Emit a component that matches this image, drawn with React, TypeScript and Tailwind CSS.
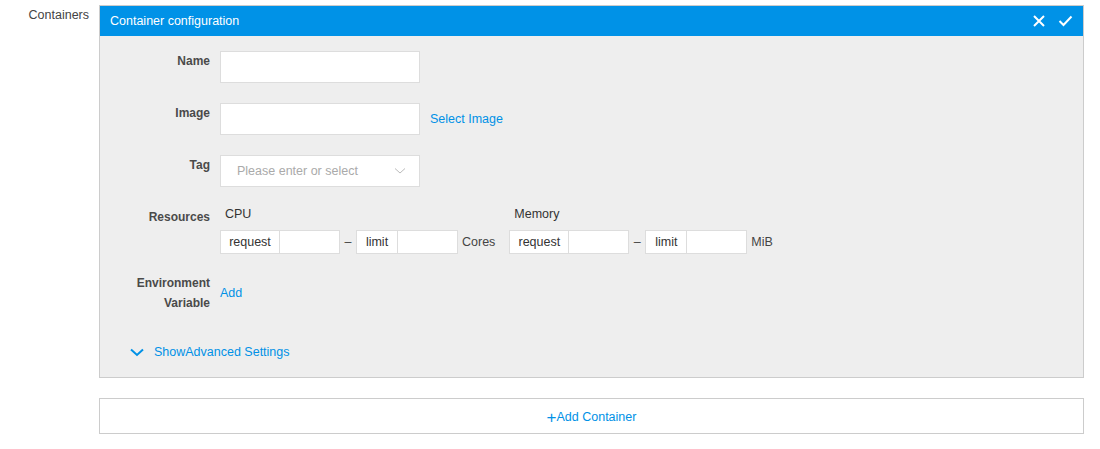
import React from "react";

const font = { fontFamily: '"Liberation Sans", Arial, sans-serif' };

function Label({ children }: { children: React.ReactNode }) {
  return (
    <div className="w-[120px] shrink-0 pr-[10px] text-right text-[12px] font-bold leading-[20px] text-[#4a4a4a]">
      {children}
    </div>
  );
}

function Group({ addon, w }: { addon: string; w: string }) {
  return (
    <div className="flex h-[24px]">
      <div className={`${w} flex items-center justify-center border border-r-0 border-[#ddd] bg-white text-[12.5px] text-[#333]`}>{addon}</div>
      <div className="w-[61px] border border-[#ddd] bg-white" />
    </div>
  );
}

export default function App() {
  return (
    <div className="flex w-[1100px] bg-white pt-[5px] text-[12.5px]" style={font}>
      <div className="w-[99px] pr-[10px] pt-[2px] text-right text-[12.5px] leading-[16px] text-[#444]">Containers</div>
      <div className="flex w-[985px] flex-col">
        <div className="border border-[#ccc] bg-[#eee]">
          <div className="flex h-[30px] items-center justify-between bg-[#0092e7] pl-[10px] pr-[10px] text-[12.5px] text-white">
            <span>Container configuration</span>
            <div className="flex items-center gap-[12px]">
              <svg width="14" height="14" viewBox="0 0 14 14">
                <path d="M2 2L12 12M12 2L2 12" stroke="white" strokeWidth="2" />
              </svg>
              <svg width="15" height="14" viewBox="0 0 15 14">
                <path d="M1.5 7L5.5 11L13.5 2.5" stroke="white" strokeWidth="2" fill="none" />
              </svg>
            </div>
          </div>
          <div className="flex flex-col pt-[15px]">
            <div className="flex h-[32px]">
              <Label>Name</Label>
              <div className="h-[32px] w-[200px] border border-[#ddd] bg-white" />
            </div>
            <div className="mt-[20px] flex h-[32px]">
              <Label>Image</Label>
              <div className="h-[32px] w-[200px] border border-[#ddd] bg-white" />
              <span className="ml-[10px] self-center text-[#0091e6]">Select Image</span>
            </div>
            <div className="mt-[20px] flex h-[32px]">
              <Label>Tag</Label>
              <div className="flex h-[32px] w-[200px] items-center justify-between border border-[#ddd] bg-white pl-[16px] pr-[13px]">
                <span className="text-[#aaa]">Please enter or select</span>
                <svg width="12" height="8" viewBox="0 0 12 8">
                  <path d="M1 1.5L6 6L11 1.5" stroke="#bbb" strokeWidth="1" fill="none" />
                </svg>
              </div>
            </div>
            <div className="mt-[20px] flex">
              <Label>Resources</Label>
              <div className="flex gap-[14px]">
                <div className="flex flex-col">
                  <div className="h-[23px] pl-[5px] leading-[14px] text-[#333]">CPU</div>
                  <div className="flex items-center">
                    <Group addon="request" w="w-[59px]" />
                    <span className="w-[16px] text-center text-[#444]">–</span>
                    <Group addon="limit" w="w-[41px]" />
                    <span className="ml-[4px] text-[#444]">Cores</span>
                  </div>
                </div>
                <div className="flex flex-col">
                  <div className="h-[23px] pl-[5px] leading-[14px] text-[#333]">Memory</div>
                  <div className="flex items-center">
                    <Group addon="request" w="w-[59px]" />
                    <span className="w-[16px] text-center text-[#444]">–</span>
                    <Group addon="limit" w="w-[41px]" />
                    <span className="ml-[4px] text-[#444]">MiB</span>
                  </div>
                </div>
              </div>
            </div>
            <div className="mt-[19px] flex">
              <Label>Environment Variable</Label>
              <span className="self-center text-[#0091e6]">Add</span>
            </div>
            <div className="mt-[29px] flex h-[20px] items-center pl-[30px]">
              <svg width="14" height="9" viewBox="0 0 14 9">
                <path d="M1 1.5L7 7L13 1.5" stroke="#0091e6" strokeWidth="2" fill="none" />
              </svg>
              <span className="ml-[10px] text-[#0091e6]">ShowAdvanced Settings</span>
            </div>
            <div className="h-[15px]" />
          </div>
        </div>
        <div className="mt-[20px] flex h-[36px] items-center justify-center border border-[#ccc] bg-white pt-[3px] text-[#0091e6]">
          <span className="text-[17px] font-light leading-[12px]">+</span>
          <span>Add Container</span>
        </div>
      </div>
    </div>
  );
}
